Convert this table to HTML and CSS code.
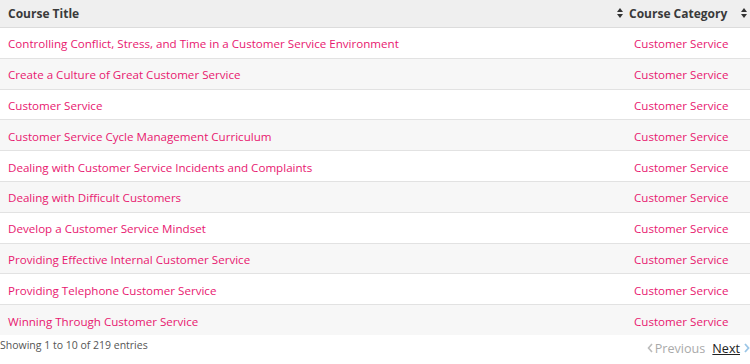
FILE: index.html
```html
<!DOCTYPE html>
<html>
<head>
<meta charset="utf-8">
<link rel="stylesheet" href="styles.css">
</head>
<body>
<div class="wrap">
<table class="courses">
<thead>
<tr>
<th class="col-title"><span>Course Title</span><span class="sort"></span></th>
<th class="col-cat"><span>Course Category</span><span class="sort"></span></th>
</tr>
</thead>
<tbody>
<tr><td>Controlling Conflict, Stress, and Time in a Customer Service Environment</td><td class="cat">Customer Service</td></tr>
<tr><td>Create a Culture of Great Customer Service</td><td class="cat">Customer Service</td></tr>
<tr><td>Customer Service</td><td class="cat">Customer Service</td></tr>
<tr><td>Customer Service Cycle Management Curriculum</td><td class="cat">Customer Service</td></tr>
<tr><td>Dealing with Customer Service Incidents and Complaints</td><td class="cat">Customer Service</td></tr>
<tr><td>Dealing with Difficult Customers</td><td class="cat">Customer Service</td></tr>
<tr><td>Develop a Customer Service Mindset</td><td class="cat">Customer Service</td></tr>
<tr><td>Providing Effective Internal Customer Service</td><td class="cat">Customer Service</td></tr>
<tr><td>Providing Telephone Customer Service</td><td class="cat">Customer Service</td></tr>
<tr><td>Winning Through Customer Service</td><td class="cat">Customer Service</td></tr>
</tbody>
</table>
<div class="footer">
<div class="info">Showing 1 to 10 of 219 entries</div>
<div class="pager">
<svg class="chev-l" width="6" height="10" viewBox="0 0 6 10"><path d="M5 1 L1.5 5 L5 9" fill="none" stroke="#bbb" stroke-width="1.6"/></svg>
<span class="prev">Previous</span>
<a class="next" href="#">Next</a>
<svg class="chev-r" width="6" height="10" viewBox="0 0 6 10"><path d="M1 1 L4.5 5 L1 9" fill="none" stroke="#9cc6e6" stroke-width="1.8"/></svg>
</div>
</div>
</div>
</body>
</html>
```

FILE: styles.css
```css
html, body {
  margin: 0;
  padding: 0;
  background: #ffffff;
}
body {
  font-family: "Open Sans", "Liberation Sans", sans-serif;
  overflow: hidden;
}
.wrap {
  width: 750px;
}
.courses {
  width: 100%;
  border-collapse: collapse;
  table-layout: fixed;
}
.courses th {
  background: #efefef;
  color: #3a3a3a;
  font-size: 12px;
  font-weight: 700;
  text-align: left;
  height: 27px;
  padding: 0 0 0 8px;
  border-bottom: 1px solid #dcdcdc;
  position: relative;
}
.courses th.col-title { width: 618px; }
.courses th.col-cat { padding-left: 3px; }
.sort {
  position: absolute;
  right: 3px;
  top: 8px;
  width: 6px;
  height: 10px;
}
.sort::before, .sort::after {
  content: "";
  position: absolute;
  left: 0;
  border-left: 3px solid transparent;
  border-right: 3px solid transparent;
}
.sort::before { top: 0; border-bottom: 4px solid #333; }
.sort::after { bottom: 0; border-top: 4px solid #333; }
.courses td {
  color: #e8176f;
  font-size: 11.6px;
  height: 27.8px;
  padding: 2px 0 0 8px;
  border-bottom: 1px solid #e2e2e2;
  white-space: nowrap;
}
.courses tbody tr:nth-child(even) td { background: #f7f7f7; }
.courses td.cat { padding-left: 8px; }
.courses tbody tr:last-child td { border-bottom: none; }
.footer {
  display: flex;
  justify-content: space-between;
  align-items: flex-start;
  padding-top: 3px;
}
.info {
  font-size: 10.5px;
  color: #555;
}
.pager {
  display: flex;
  align-items: center;
  margin-top: 2px;
  font-size: 12.6px;
  white-space: nowrap;
  margin-right: 0;
}
.prev { color: #aaa; margin-left: 2px; }
.chev-l { display: block; }
.chev-r { display: block; margin-left: 4px; }
.next {
  color: #222;
  text-decoration: underline;
  margin-left: 7px;
}
```
